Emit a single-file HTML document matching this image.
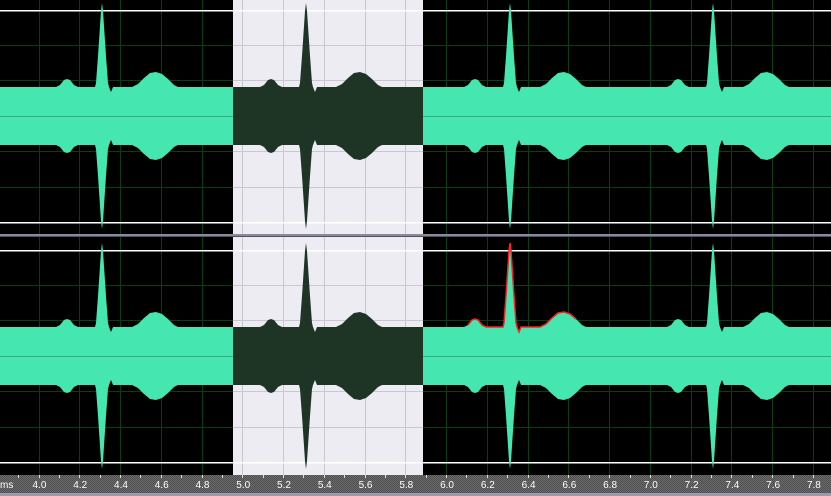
<!DOCTYPE html>
<html><head><meta charset="utf-8"><style>
html,body{margin:0;padding:0;background:#000;width:831px;height:496px;overflow:hidden}
svg{display:block}
text{font-family:"Liberation Sans",sans-serif;font-size:10px;fill:#fff}
</style></head><body>
<svg id="s" width="831" height="496" xmlns="http://www.w3.org/2000/svg">
<defs>
<clipPath id="sel"><rect x="233" y="0" width="190" height="475"/></clipPath>
<clipPath id="nosel"><rect x="0" y="0" width="233" height="475"/><rect x="423" y="0" width="408" height="475"/></clipPath>
<pattern id="rul" width="2" height="2" patternUnits="userSpaceOnUse"><rect width="2" height="2" fill="#6a6a6a"/><rect width="1" height="1" fill="#505050"/><rect x="1" y="1" width="1" height="1" fill="#505050"/></pattern>
</defs>
<rect width="831" height="475" fill="#000"/>
<rect x="233" y="0" width="190" height="475" fill="#ececf2"/>
<g id="grid"></g>
<g id="wav"></g>
<rect x="0" y="234" width="831" height="3" fill="#8a8a9a"/>
<rect x="0" y="236" width="831" height="1" fill="#505060"/>
<rect x="0" y="475" width="831" height="18" fill="url(#rul)"/>
<rect x="0" y="493" width="831" height="3" fill="#9a9aa8"/>
<g id="ruler"></g>
</svg>
<script>
const NS="http://www.w3.org/2000/svg";
function el(t,a,p){const e=document.createElementNS(NS,t);for(const k in a)e.setAttribute(k,a[k]);p.appendChild(e);return e;}
const g=document.getElementById('grid'),w=document.getElementById('wav'),r=document.getElementById('ruler');
const px=t=>38.5+(t-4.0)*203.8;
for(let t=3.8;t<=7.9;t+=0.2){const x=Math.round(px(t))+0.5;
 el('line',{x1:x,y1:0,x2:x,y2:475,stroke:'#0b3d10','stroke-width':1},g);
 el('line',{x1:x,y1:0,x2:x,y2:475,stroke:'#c8c8d0','stroke-width':1,'clip-path':'url(#sel)'},g);}
[45,80,151,187,285,320,391,427].forEach(y=>{
 el('line',{x1:0,y1:y+.5,x2:831,y2:y+.5,stroke:'#0b3d10'},g);
 el('line',{x1:0,y1:y+.5,x2:831,y2:y+.5,stroke:'#c8c8d0','clip-path':'url(#sel)'},g);});
[10,222,250,462].forEach(y=>el('rect',{x:0,y:y,width:831,height:1.5,fill:'#fff'},g));
const prof=[[-102,29],[-46,29],[-42,31],[-38,36],[-35,37],[-32,36],[-28,31],[-24,29],[-7,29],[-6,33],[-4,60],[-2,90],[-1,105],[0,113],[1,105],[2,90],[4,60],[6,33],[7,29],[9,24],[11,29],[30,29],[36,32],[42,38],[48,43],[54,44],[60,42],[66,37],[72,31],[76,29],[102,29]];
function wave(cx,cy){let d='';prof.forEach((p,i)=>{d+=(i?'L':'M')+(cx+p[0])+' '+(cy-p[1]);});
 for(let i=prof.length-1;i>=0;i--){const p=prof[i];d+='L'+(cx+p[0])+' '+(cy+p[1]);}return d+'Z';}
const spikes=[-102,102,306,510,713,917];
[116,356].forEach(cy=>spikes.forEach(s=>{
 el('path',{d:wave(s,cy),fill:'#46e6b0','clip-path':'url(#nosel)'},w);
 el('path',{d:wave(s,cy),fill:'#1e3526','clip-path':'url(#sel)'},w);
 el('line',{x1:s-102,y1:cy+.5,x2:s+102,y2:cy+.5,stroke:'#3aa888','stroke-width':1,'clip-path':'url(#nosel)'},w);
}));
let d='';prof.forEach((p,i)=>{if(p[0]>=-44&&p[0]<=66)d+=(d?'L':'M')+(510+p[0])+' '+(356-p[1]);});
el('path',{d:d,fill:'none',stroke:'#ff2020','stroke-width':1.5},w);
el('text',{x:0,y:488},r).textContent='ms';
for(let t=3.9;t<=7.95;t+=0.1){const x=Math.round(px(t))+0.5;el('line',{x1:x,y1:475,x2:x,y2:478,stroke:'#ddd'},r);}
for(let t=4.0;t<=7.85;t+=0.2){const x=px(t);el('text',{x:x-6,y:488},r).textContent=t.toFixed(1);}
</script>
</body></html>
